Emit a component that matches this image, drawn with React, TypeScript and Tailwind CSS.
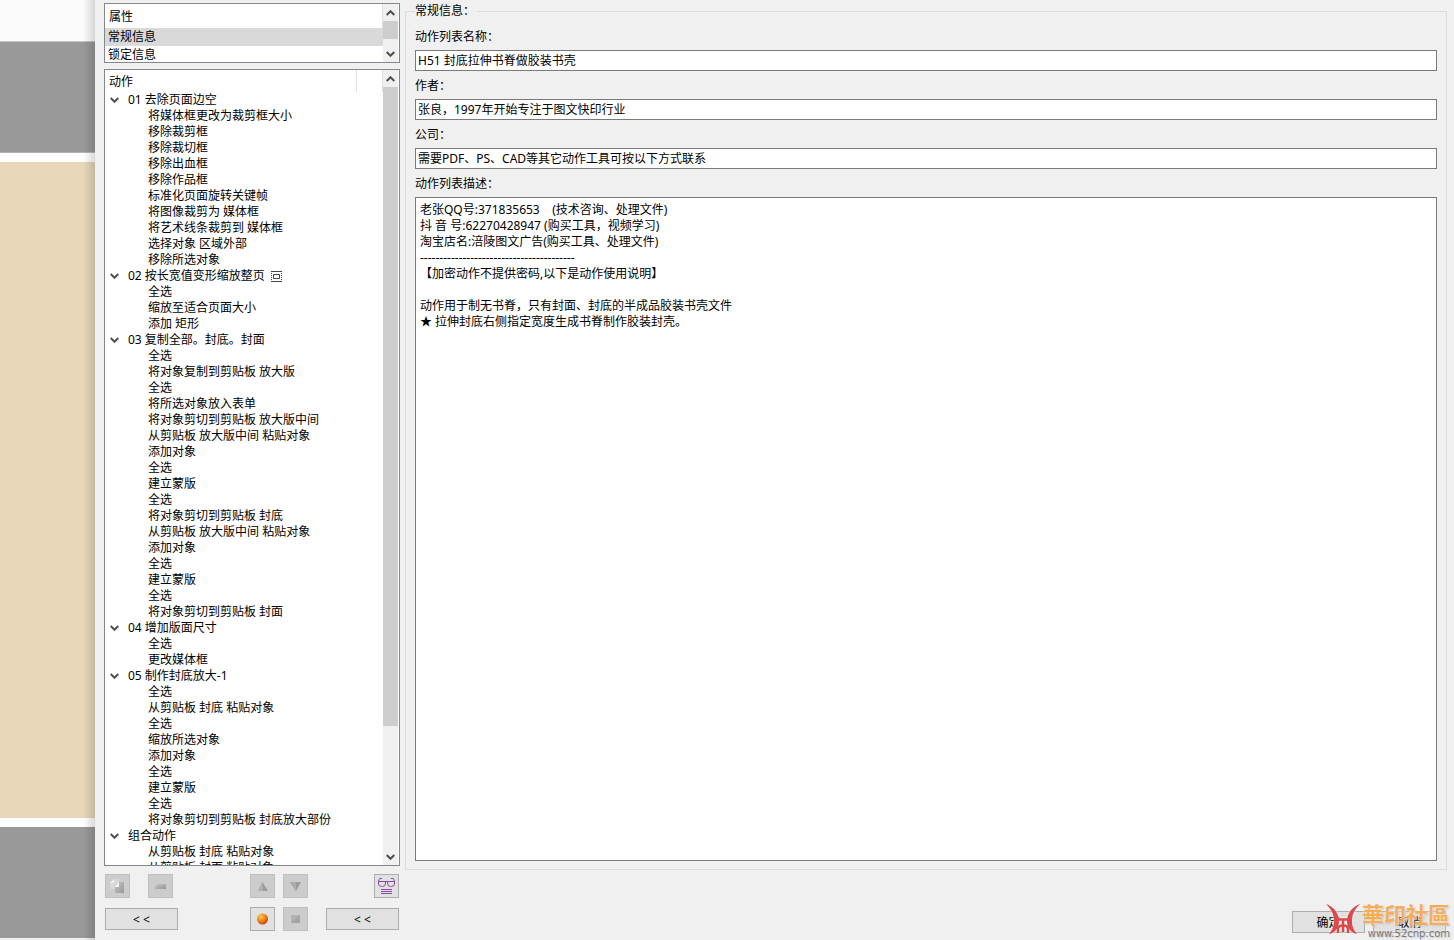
import { ReactNode } from "react";

type Group = { title: string; marker?: boolean; steps: string[] };

const groups: Group[] = [
  {
    title: "01 去除页面边空",
    steps: [
      "将媒体框更改为裁剪框大小",
      "移除裁剪框",
      "移除裁切框",
      "移除出血框",
      "移除作品框",
      "标准化页面旋转关键帧",
      "将图像裁剪为 媒体框",
      "将艺术线条裁剪到 媒体框",
      "选择对象 区域外部",
      "移除所选对象",
    ],
  },
  {
    title: "02 按长宽值变形缩放整页",
    marker: true,
    steps: ["全选", "缩放至适合页面大小", "添加 矩形"],
  },
  {
    title: "03 复制全部。封底。封面",
    steps: [
      "全选",
      "将对象复制到剪贴板 放大版",
      "全选",
      "将所选对象放入表单",
      "将对象剪切到剪贴板 放大版中间",
      "从剪贴板 放大版中间 粘贴对象",
      "添加对象",
      "全选",
      "建立蒙版",
      "全选",
      "将对象剪切到剪贴板 封底",
      "从剪贴板 放大版中间 粘贴对象",
      "添加对象",
      "全选",
      "建立蒙版",
      "全选",
      "将对象剪切到剪贴板 封面",
    ],
  },
  { title: "04 增加版面尺寸", steps: ["全选", "更改媒体框"] },
  {
    title: "05 制作封底放大-1",
    steps: [
      "全选",
      "从剪贴板 封底 粘贴对象",
      "全选",
      "缩放所选对象",
      "添加对象",
      "全选",
      "建立蒙版",
      "全选",
      "将对象剪切到剪贴板 封底放大部份",
    ],
  },
  {
    title: "组合动作",
    steps: ["从剪贴板 封底 粘贴对象", "从剪贴板 封面 粘贴对象"],
  },
];

const description = `老张QQ号:371835653    (技术咨询、处理文件)
抖 音 号:62270428947 (购买工具，视频学习)
淘宝店名:涪陵图文广告(购买工具、处理文件)
----------------------------------------
【加密动作不提供密码,以下是动作使用说明】

动作用于制无书脊，只有封面、封底的半成品胶装书壳文件
★ 拉伸封底右侧指定宽度生成书脊制作胶装封壳。`;

const Chevron = ({ up = false }: { up?: boolean }) => (
  <svg width="9" height="6" viewBox="0 0 9 6" fill="none" stroke="#505050" strokeWidth="2">
    <path d={up ? "M.7 5 4.5 1.2 8.3 5" : "M.7 1 4.5 4.8 8.3 1"} />
  </svg>
);

const ScrollBar = ({ children }: { children: ReactNode }) => (
  <div className="mr-px flex w-[15px] shrink-0 flex-col bg-[#f0f0f0]">
    <button aria-label="向上滚动" className="flex h-[17px] shrink-0 items-center justify-center">
      <Chevron up />
    </button>
    <div className="min-h-0 flex-1">{children}</div>
    <button aria-label="向下滚动" className="flex h-[17px] shrink-0 items-center justify-center">
      <Chevron />
    </button>
  </div>
);

type ToolProps = { label: string; disabled?: boolean; children: ReactNode };

const ToolButton = ({ label, disabled, children }: ToolProps) => (
  <button
    aria-label={label}
    disabled={disabled}
    className="flex h-6 w-[25px] items-center justify-center border border-[#adadad] bg-[#e1e1e1] disabled:border-[#bfbfbf] disabled:bg-[#cccccc]"
  >
    {children}
  </button>
);

const TextButton = ({ children }: { children: ReactNode }) => (
  <button className="h-[22px] w-[73px] shrink-0 border border-[#adadad] bg-[#e1e1e1] pt-px text-center leading-5">
    {children}
  </button>
);

const Field = ({ id, label, value }: { id: string; label: string; value: string }) => (
  <div className="mb-[7px] flex flex-col">
    <label htmlFor={id} className="mb-[5px] h-4">
      {label}
    </label>
    <input
      id={id}
      defaultValue={value}
      className="h-[21px] w-full border border-[#7a7a7a] bg-white px-0.5 pb-0.5 outline-none"
    />
  </div>
);

const PageBehind = () => (
  <div className="relative flex w-[95px] shrink-0 flex-col bg-white">
    <div className="h-[42px] shrink-0 border-b border-[#c8c8c8] bg-[#fbfbfb]" />
    <div className="h-[111px] shrink-0 border-b border-[#b5b5b5] bg-[#999999]" />
    <div className="my-[9px] flex-1 bg-[#e8d8b9]" />
    <div className="h-[111px] shrink-0 bg-[#999999]" />
    <div className="h-0.5 shrink-0 bg-[#f0f0f0]" />
    <div className="absolute inset-y-0 right-0 w-3 bg-linear-to-r from-black/0 to-black/15" />
  </div>
);

const PropertyList = () => (
  <div className="flex h-[60px] shrink-0 border border-[#828790] bg-white">
    <div className="min-w-0 flex-1 overflow-hidden">
      <div className="h-6 border-r border-[#e0e0e0] pl-1 leading-[26px]">属性</div>
      <ul>
        <li className="h-[18px] bg-[#d9d9d9] pl-[3px] leading-[18px]">常规信息</li>
        <li className="h-4 pl-[3px] leading-[18px]">锁定信息</li>
      </ul>
    </div>
    <ScrollBar>
      <div className="h-[18px] bg-[#cdcdcd]" />
    </ScrollBar>
  </div>
);

const ActionTree = () => (
  <div className="mt-1.5 flex min-h-0 flex-1 border border-[#828790] bg-white">
    <div className="min-w-0 flex-1 overflow-hidden">
      <div className="flex h-[22px] border-r border-[#e0e0e0] leading-6">
        <span className="flex-1 pl-1">动作</span>
        <span className="w-[26px] border-l border-[#e0e0e0]" />
      </div>
      <ul className="leading-4 whitespace-nowrap">
        {groups.map((group) => (
          <li key={group.title}>
            <div className="flex h-4 items-center pl-[5px]">
              <span className="w-[18px]">
                <Chevron />
              </span>
              {group.title}
              {group.marker && (
                <svg className="ml-1.5" width="11" height="11" viewBox="0 0 11 11" fill="none" stroke="#444">
                  <path d="M0 .5h11M0 10.5h11M2.500 3.500h6v4h-6z" />
                  <path d="M.5 2v7M10.500 2v7" strokeDasharray="1 1" />
                </svg>
              )}
            </div>
            <ul>
              {group.steps.map((step, i) => (
                <li key={i} className="h-4 pl-[43px]">
                  {step}
                </li>
              ))}
            </ul>
          </li>
        ))}
      </ul>
    </div>
    <ScrollBar>
      <div className="h-[84%] bg-[#cdcdcd]" />
    </ScrollBar>
  </div>
);

const Toolbar = () => (
  <div className="flex shrink-0 flex-col gap-[9px] px-px pt-2 pb-[9px]">
    <div className="flex">
      <div className="flex w-[73px] gap-[18px]">
        <ToolButton label="新建" disabled>
          <svg width="15" height="16" viewBox="0 0 15 16">
            <defs>
              <linearGradient id="sheet" x1="0" y1="0" x2="1" y2="1">
                <stop offset="0" stopColor="#c4c4c4" />
                <stop offset="1" stopColor="#989898" />
              </linearGradient>
            </defs>
            <path d="M0 5 4 1h5v10H0z" fill="#d8d8d8" />
            <path d="M0 5h4V1z" fill="#f4f4f4" />
            <path d="M5 8l4-4h5v11H5z" fill="url(#sheet)" />
            <path d="M5 9V8l4-4v5z" fill="#f2f2f2" />
          </svg>
        </ToolButton>
        <ToolButton label="删除" disabled>
          <svg width="11" height="6" viewBox="0 0 11 6">
            <defs>
              <linearGradient id="bar" x1="0" y1="0" x2="1" y2="1">
                <stop offset="0" stopColor="#c6c6c6" />
                <stop offset="1" stopColor="#969696" />
              </linearGradient>
            </defs>
            <path d="M0 5V3.500Q1 1 4 1h7v5H0z" fill="url(#bar)" />
          </svg>
        </ToolButton>
      </div>
      <div className="ml-auto flex gap-2">
        <ToolButton label="上移" disabled>
          <svg width="11" height="10" viewBox="0 0 11 10">
            <path d="M5.500 1 11 10H1z" fill="#9c9c9c" />
            <path d="M5.500 1 6 10H1z" fill="#b0b0b0" />
          </svg>
        </ToolButton>
        <ToolButton label="下移" disabled>
          <svg width="11" height="10" viewBox="0 0 11 10">
            <path d="M0 1h11L6 10z" fill="#9c9c9c" />
            <path d="M0 1h6v9z" fill="#acacac" />
          </svg>
        </ToolButton>
      </div>
      <div className="ml-[18px] flex w-[73px] justify-end">
        <ToolButton label="预览">
          <svg width="17" height="16" viewBox="0 0 17 16" fill="none" stroke="#8c4aa8">
            <path d="M4 .5H2Q.5 1 .5 3.500V6q.5 2.500 3 2.500h1q3 0 3-3.500V3.500M13 .5h2q1.500.5 1.500 3V6q-.5 2.500-3 2.500h-1q-3 0-3-3.500V3.500" />
            <path d="M0 3.500h17M3 11.500h11M3 13.500h11M3 15.500h11" />
          </svg>
        </ToolButton>
      </div>
    </div>
    <div className="flex items-center">
      <TextButton>&lt; &lt;</TextButton>
      <div className="ml-auto flex gap-2">
        <ToolButton label="录制">
          <svg width="11" height="12" viewBox="0 0 12 12">
            <defs>
              <radialGradient id="ball" cx=".35" cy=".3" r=".75">
                <stop offset="0" stopColor="#ffc850" />
                <stop offset=".5" stopColor="#f08a1c" />
                <stop offset="1" stopColor="#c23c10" />
              </radialGradient>
            </defs>
            <circle cx="6" cy="6" r="6" fill="url(#ball)" />
          </svg>
        </ToolButton>
        <ToolButton label="停止" disabled>
          <svg width="9" height="8" viewBox="0 0 9 8">
            <path d="M0 1 1 0h8v8H0z" fill="#a4a4a4" />
            <path d="M0 1 1 0h8L0 8z" fill="#b2b2b2" />
          </svg>
        </ToolButton>
      </div>
      <div className="ml-[18px] flex">
        <TextButton>&lt; &lt;</TextButton>
      </div>
    </div>
  </div>
);

const Watermark = () => (
  <div className="pointer-events-none absolute right-1 bottom-0 flex [text-shadow:0_0_3px_#fff,1px_1px_2px_#aaa]">
    <svg
      className="drop-shadow-[0_0_1px_#fff]"
      width="36"
      height="34"
      viewBox="0 0 36 34"
      fill="#dd4a4c"
    >
      <path d="M0 2c7 2 13 9 13 17 0 7-4 12-10 13 3-4 5-7 5-13C8 12 5 7 0 2z" />
      <path d="M34 2c-7 2-13 9-13 17 0 7 4 12 10 13-3-4-5-7-5-13 0-7 3-12 8-17z" />
      <path
        d="M11 17.500h12M12 31v-4q0-3.500 5-3.500t5 3.500v4M17 18v12"
        fill="none"
        stroke="#dd4a4c"
        strokeWidth="2.500"
      />
    </svg>
    <div className="flex flex-col items-end">
      <span className="mb-0.5 text-[22px] leading-6 font-bold text-[#f5ae55]">華印社區</span>
      <span className="font-['DejaVu_Sans',sans-serif] text-[10px] leading-3 text-[#777777]">
        www.52cnp.com
      </span>
    </div>
  </div>
);

const App = () => (
  <div className="flex h-screen overflow-hidden bg-[#f0f0f0] font-['Noto_Sans','Noto_Sans_CJK_SC',sans-serif] text-xs leading-4 text-black">
    <PageBehind />
    <aside className="ml-[9px] flex w-[296px] shrink-0 flex-col pt-[3px]">
      <PropertyList />
      <ActionTree />
      <Toolbar />
    </aside>
    <main className="relative ml-[5px] flex min-w-0 flex-1 flex-col pt-[3px] pr-[7px]">
      <fieldset className="flex min-h-0 flex-1 flex-col border border-[#dcdcdc] px-[9px] pb-2">
        <legend className="pr-0.5">常规信息：</legend>
        <div className="flex h-full flex-col pt-2.5">
          <Field id="name" label="动作列表名称：" value="H51 封底拉伸书脊做胶装书壳" />
          <Field id="author" label="作者：" value="张良，1997年开始专注于图文快印行业" />
          <Field id="company" label="公司：" value="需要PDF、PS、CAD等其它动作工具可按以下方式联系" />
          <label htmlFor="description" className="mb-[5px] h-4">
            动作列表描述：
          </label>
          <textarea
            id="description"
            defaultValue={description}
            className="min-h-0 w-full flex-1 resize-none border border-[#7a7a7a] bg-white px-1 py-1 leading-4 outline-none"
          />
        </div>
      </fieldset>
      <div className="flex justify-end gap-2 pt-[41px] pr-px pb-[7px]">
        <TextButton>确定</TextButton>
        <TextButton>取消</TextButton>
      </div>
      <Watermark />
    </main>
  </div>
);

export default App;
